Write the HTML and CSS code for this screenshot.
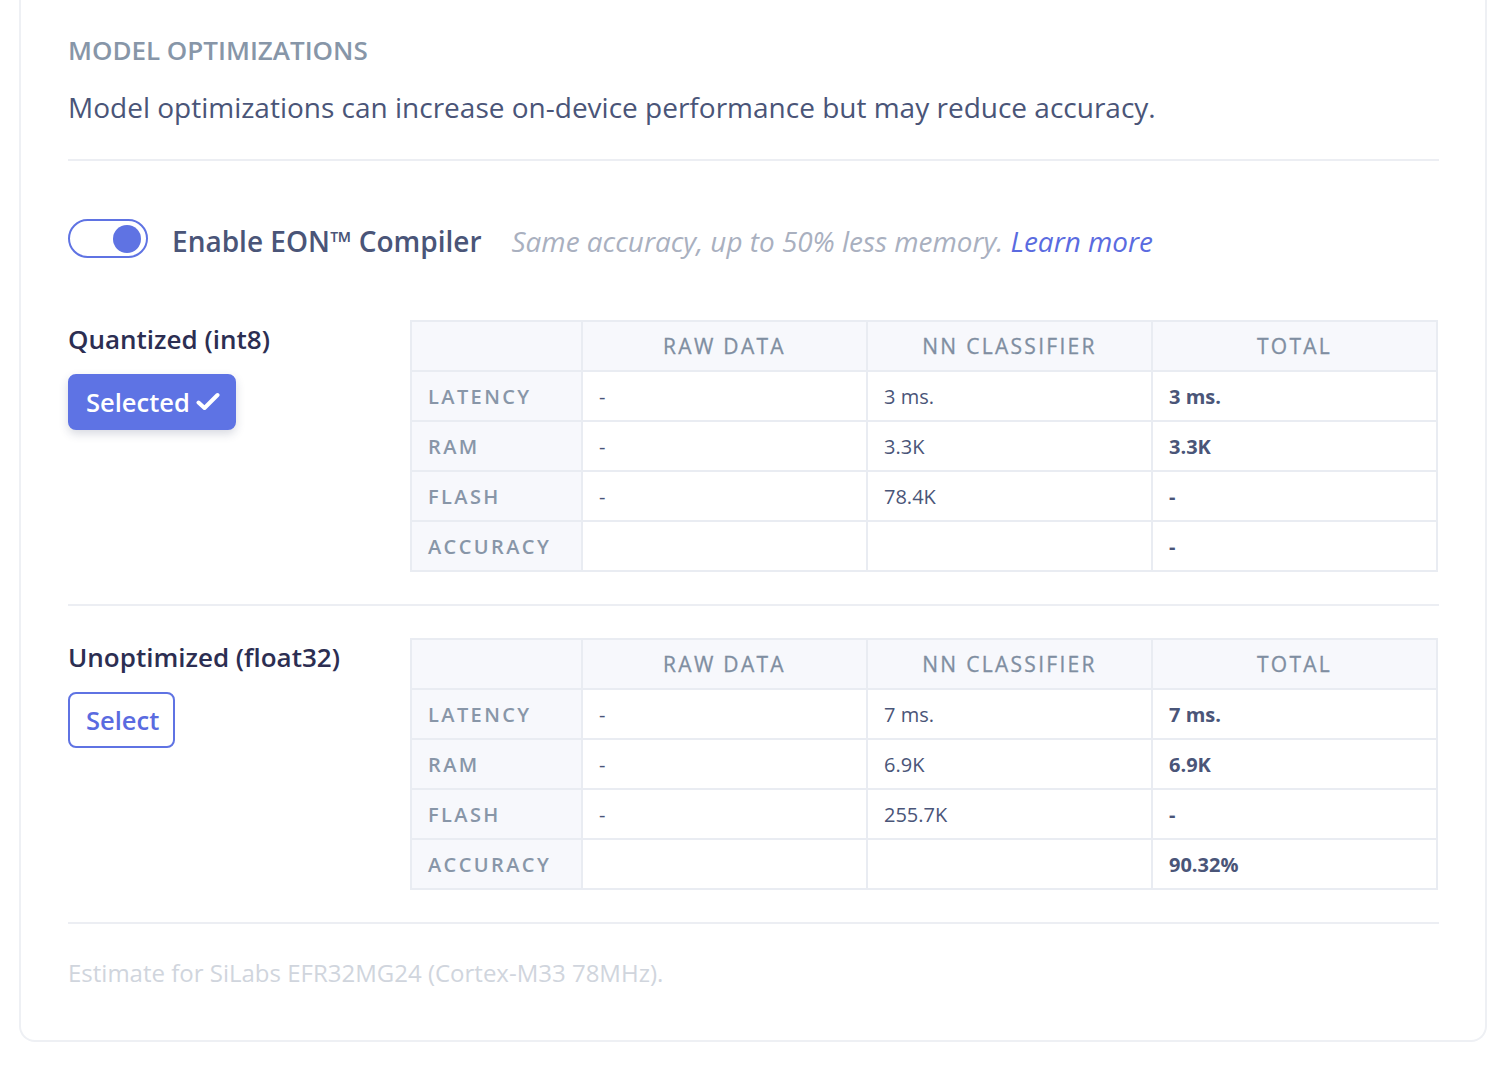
FILE: index.html
```html
<!DOCTYPE html>
<html>
<head>
<meta charset="utf-8">
<link rel="stylesheet" href="styles.css">
</head>
<body>
<div class="page">
  <div class="card">
    <h2 class="title">MODEL OPTIMIZATIONS</h2>
    <p class="lead">Model optimizations can increase on-device performance but may reduce accuracy.</p>
    <div class="divider"></div>

    <div class="eon">
      <span class="toggle"><span class="knob"></span></span>
      <span class="eon-label">Enable EON™ Compiler</span>
      <span class="eon-hint">Same accuracy, up to 50% less memory. <a class="learn" href="#">Learn more</a></span>
    </div>

    <div class="section">
      <div class="side">
        <div class="side-title">Quantized (int8)</div>
        <button class="btn btn-primary">Selected <svg class="check" width="24" height="20" viewBox="0 0 24 20"><polyline points="2.5,10.5 8.5,16 21.5,3" fill="none" stroke="#fff" stroke-width="4" stroke-linecap="round" stroke-linejoin="round"/></svg></button>
      </div>
      <table class="stats">
        <thead>
          <tr><th class="corner"></th><th>RAW DATA</th><th>NN CLASSIFIER</th><th>TOTAL</th></tr>
        </thead>
        <tbody>
          <tr><th>LATENCY</th><td>-</td><td>3 ms.</td><td class="b">3 ms.</td></tr>
          <tr><th>RAM</th><td>-</td><td>3.3K</td><td class="b">3.3K</td></tr>
          <tr><th>FLASH</th><td>-</td><td>78.4K</td><td class="b">-</td></tr>
          <tr><th>ACCURACY</th><td></td><td></td><td class="b">-</td></tr>
        </tbody>
      </table>
    </div>
    <div class="divider"></div>

    <div class="section">
      <div class="side">
        <div class="side-title">Unoptimized (float32)</div>
        <button class="btn btn-outline">Select</button>
      </div>
      <table class="stats">
        <thead>
          <tr><th class="corner"></th><th>RAW DATA</th><th>NN CLASSIFIER</th><th>TOTAL</th></tr>
        </thead>
        <tbody>
          <tr><th>LATENCY</th><td>-</td><td>7 ms.</td><td class="b">7 ms.</td></tr>
          <tr><th>RAM</th><td>-</td><td>6.9K</td><td class="b">6.9K</td></tr>
          <tr><th>FLASH</th><td>-</td><td>255.7K</td><td class="b">-</td></tr>
          <tr><th>ACCURACY</th><td></td><td></td><td class="b">90.32%</td></tr>
        </tbody>
      </table>
    </div>
    <div class="divider"></div>

    <p class="footer">Estimate for SiLabs EFR32MG24 (Cortex-M33 78MHz).</p>
  </div>
</div>
</body>
</html>
```

FILE: styles.css
```css
* { box-sizing: border-box; }
html, body { margin: 0; padding: 0; background: #fff; }
body { font-family: "Open Sans", "Noto Sans", sans-serif; color: #4a5578; }

.page { padding: 0 1px 0 19px; }

.card {
  border: 2px solid #eef0f4;
  border-top: none;
  border-radius: 0 0 16px 16px;
  padding: 29px 46px 51px 47px;
  background: #fff;
}

.title {
  margin: 0;
  font-size: 26px;
  line-height: 42px;
  font-weight: 600;
  color: #8796a8;
}

.lead {
  margin: 15px 0 0;
  font-size: 28px;
  line-height: 42px;
  color: #4a5578;
}

.divider { height: 2px; background: #eceef3; margin: 0; }
.card > .lead + .divider { margin-top: 31px; }

.eon {
  display: flex;
  align-items: center;
  margin-top: 58px;
  height: 39px;
}
.toggle {
  width: 80px;
  height: 39px;
  border: 2px solid #5f73e3;
  border-radius: 20px;
  display: flex;
  align-items: center;
  justify-content: flex-end;
  padding-right: 5px;
  flex: none;
}
.knob { width: 28px; height: 28px; border-radius: 50%; background: #5f73e3; }
.eon-label {
  margin-left: 24px;
  padding-top: 5px;
  font-size: 28px;
  font-weight: 600;
  color: #4a5578;
  white-space: nowrap;
}
.eon-hint {
  margin-left: 30px;
  padding-top: 5px;
  font-size: 27.9px;
  font-style: italic;
  color: #a9b0bf;
  white-space: nowrap;
}
.learn { color: #5a6be0; text-decoration: none; }

.section {
  display: flex;
  align-items: flex-start;
  padding: 32px 0 32px;
}
.eon + .section { padding-top: 62px; }

.side { width: 342px; flex: none; }
.side-title {
  font-size: 26px;
  line-height: 38px;
  font-weight: 600;
  color: #2c2e52;
}
.btn {
  font-family: "Open Sans", "Noto Sans", sans-serif;
  font-size: 25.5px;
  font-weight: 600;
  height: 56px;
  border-radius: 8px;
  display: inline-flex;
  align-items: center;
  padding: 0 14px 0 16px;
  margin-top: 16px;
  cursor: pointer;
}
.btn-primary {
  background: #5e73e4;
  color: #fff;
  border: 2px solid #5e73e4;
  box-shadow: 0 4px 10px rgba(40, 50, 90, 0.18);
}
.check { margin-left: 6px; }
.btn-outline {
  background: #fff;
  color: #5a6be0;
  border: 2px solid #5f73e3;
}

.stats {
  width: 1028px;
  border-collapse: collapse;
  table-layout: fixed;
  border: 2px solid #e9ecf2;
}
.stats th, .stats td {
  border: 2px solid #e9ecf2;
  height: 50px;
  padding: 0 16px;
  text-align: left;
  white-space: nowrap;
}
.stats thead th {
  background: #f7f8fc;
  text-align: center;
  font-size: 21px;
  font-weight: 500;
  letter-spacing: 2.3px;
  color: #7f8ea1;
  -webkit-text-stroke: 0.3px #7f8ea1;
}
.stats thead th.corner { width: 171px; }
.stats tbody th {
  background: #f7f8fc;
  font-size: 20px;
  font-weight: 600;
  letter-spacing: 2.4px;
  color: #8896a8;
}
.stats td {
  font-size: 20px;
  color: #4a5578;
}
.stats td.b { font-weight: 700; }

.footer {
  margin: 33px 0 0;
  font-size: 24px;
  line-height: 32px;
  color: #d0d5dd;
}
```
